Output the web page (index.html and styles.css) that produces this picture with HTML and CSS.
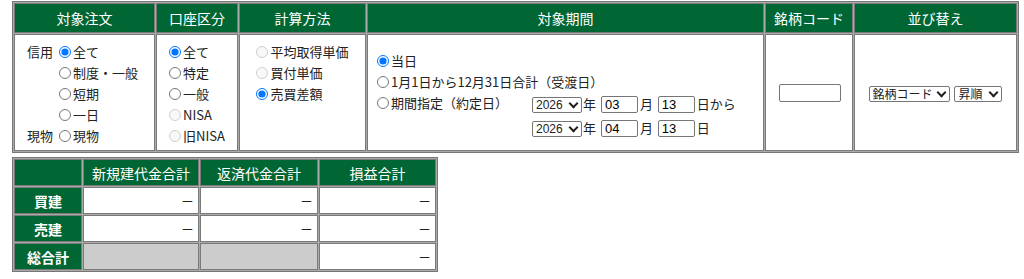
FILE: index.html
```html
<!DOCTYPE html>
<html lang="ja">
<head>
<meta charset="UTF-8" />
<title>損益照会</title>
<link rel="stylesheet" href="styles.css">
</head>
<body>

<table class="grid search">
  <tr>
    <th class="w-order">対象注文</th>
    <th class="w-account">口座区分</th>
    <th class="w-calc">計算方法</th>
    <th class="w-period">対象期間</th>
    <th class="w-code">銘柄コード</th>
    <th class="w-sort">並び替え</th>
  </tr>
  <tr>
    <td class="top">
      <div class="opts order">
        <span class="lbl">信用</span>
        <label><input type="radio" name="order" checked>全て</label>
        <span></span>
        <label><input type="radio" name="order">制度・一般</label>
        <span></span>
        <label><input type="radio" name="order">短期</label>
        <span></span>
        <label><input type="radio" name="order">一日</label>
        <span class="lbl">現物</span>
        <label><input type="radio" name="order">現物</label>
      </div>
    </td>
    <td class="top">
      <div class="opts">
        <label><input type="radio" name="acct" checked>全て</label>
        <label><input type="radio" name="acct">特定</label>
        <label><input type="radio" name="acct">一般</label>
        <label><input type="radio" name="acct" disabled>NISA</label>
        <label><input type="radio" name="acct" disabled>旧NISA</label>
      </div>
    </td>
    <td class="top">
      <div class="opts">
        <label><input type="radio" name="calc" disabled>平均取得単価</label>
        <label><input type="radio" name="calc" disabled>買付単価</label>
        <label><input type="radio" name="calc" checked>売買差額</label>
      </div>
    </td>
    <td class="period">
      <label class="line"><input type="radio" name="term" checked>当日</label>
      <label class="line"><input type="radio" name="term">1月1日から12月31日合計（受渡日）</label>
      <div class="range">
        <label class="line"><input type="radio" name="term">期間指定（約定日）</label>
        <div class="dates">
          <div class="date">
            <span class="sel year"><select><option>2026</option></select></span>年
            <input type="text" class="num" value="03">月
            <input type="text" class="num" value="13">日から
          </div>
          <div class="date">
            <span class="sel year"><select><option>2026</option></select></span>年
            <input type="text" class="num" value="04">月
            <input type="text" class="num" value="13">日
          </div>
        </div>
      </div>
    </td>
    <td class="mid"><input type="text" class="code"></td>
    <td class="mid">
      <span class="sel small key"><select><option>銘柄コード</option></select></span>
      <span class="sel small order-dir"><select><option>昇順</option></select></span>
    </td>
  </tr>
</table>

<table class="grid summary">
  <tr>
    <th class="w-head"></th>
    <th class="w-new">新規建代金合計</th>
    <th class="w-ret">返済代金合計</th>
    <th class="w-pl">損益合計</th>
  </tr>
  <tr>
    <th class="row">買建</th>
    <td class="val">－</td>
    <td class="val">－</td>
    <td class="val">－</td>
  </tr>
  <tr>
    <th class="row">売建</th>
    <td class="val">－</td>
    <td class="val">－</td>
    <td class="val">－</td>
  </tr>
  <tr>
    <th class="row">総合計</th>
    <td class="blank"></td>
    <td class="blank"></td>
    <td class="val">－</td>
  </tr>
</table>

</body>
</html>
```

FILE: styles.css
```css
* { box-sizing: border-box; }
body {
  margin: 0;
  padding: 1px 0 0 12px;
  background: #fff;
  color: #222;
  font-family: "Noto Sans CJK JP", "Noto Sans", sans-serif;
  font-size: 13px;
}

/* tables */
.grid {
  border-collapse: separate;
  border-spacing: 1px;
  border: 1px solid #777;
  background: #aaa;
  table-layout: fixed;
}
.grid th, .grid td {
  border: 1px solid #7a7a7a;
  padding: 0;
}
.grid th {
  background: #006633;
  color: #fff;
  font-weight: normal;
  font-size: 14px;
  text-align: center;
}
.grid td { background: #fff; }

.search { width: 1007px; }
.search th { height: 30px; }
.search td { height: 117px; text-align: center; vertical-align: middle; }
.w-order { width: 141px; }
.w-account { width: 82px; }
.w-calc { width: 127px; }
.w-period { width: 397px; }
.w-code { width: 88px; }
.w-sort { width: 163px; }

.search td.top { vertical-align: top; padding-top: 6px; }

/* radio lists */
.opts {
  display: inline-grid;
  text-align: left;
  line-height: 21px;
}
.opts.order {
  grid-template-columns: auto auto;
  column-gap: 6px;
  margin-right: 4px;
}
.opts label { white-space: nowrap; }
input[type=radio] {
  width: 12px;
  height: 12px;
  margin: 0 2px 0 0;
  vertical-align: -1px;
}

/* period */
.search td.period {
  text-align: left;
  padding: 6px 0 0 9px;
}
.line { display: block; line-height: 21px; white-space: nowrap; }
.range { display: flex; }
.dates { margin-left: 24px; padding-top: 2px; }
.date { height: 24px; white-space: nowrap; }

/* selects with chevron */
.sel {
  position: relative;
  display: inline-block;
  vertical-align: middle;
  line-height: 0;
}
.sel select {
  appearance: none;
  -webkit-appearance: none;
  width: 100%;
  height: 16px;
  padding: 0 0 0 3px;
  border: 1px solid #767676;
  border-radius: 2px;
  background: #fff;
  color: #222;
  font-family: "Liberation Sans", Arial, sans-serif;
  font-size: 12px;
  line-height: 14px;
}
.sel::after {
  content: "";
  position: absolute;
  right: 5px;
  top: 3px;
  width: 5px;
  height: 5px;
  border-right: 2px solid #222;
  border-bottom: 2px solid #222;
  transform: rotate(45deg);
  pointer-events: none;
}
.sel.year { width: 50px; margin-right: 1px; }
.sel.small select {
  font-family: "Noto Sans CJK JP", sans-serif;
  font-size: 12px;
}
.sel.small { margin: 0 1px; }
.sel.key { width: 81px; }
.sel.order-dir { width: 48px; }

.num {
  width: 37px;
  height: 17px;
  font-family: "Liberation Sans", Arial, sans-serif;
  font-size: 13px;
  padding: 0 3px;
  margin: 0 2px;
  border: 1px solid #767676;
  border-radius: 2px;
  vertical-align: middle;
}
.code {
  width: 62px;
  height: 18px;
  border: 1px solid #767676;
  border-radius: 2px;
  margin-left: 2px;
}

/* summary */
.summary { width: 426px; margin-top: 4px; }
.summary th, .summary td { height: 27px; }
.w-head { width: 68px; }
.w-new { width: 116px; }
.w-ret { width: 118px; }
.w-pl { width: 117px; }
.summary th.row { font-weight: bold; }
.summary td.val { text-align: right; padding-right: 4px; }
.summary td.blank { background: #ccc; }
```
